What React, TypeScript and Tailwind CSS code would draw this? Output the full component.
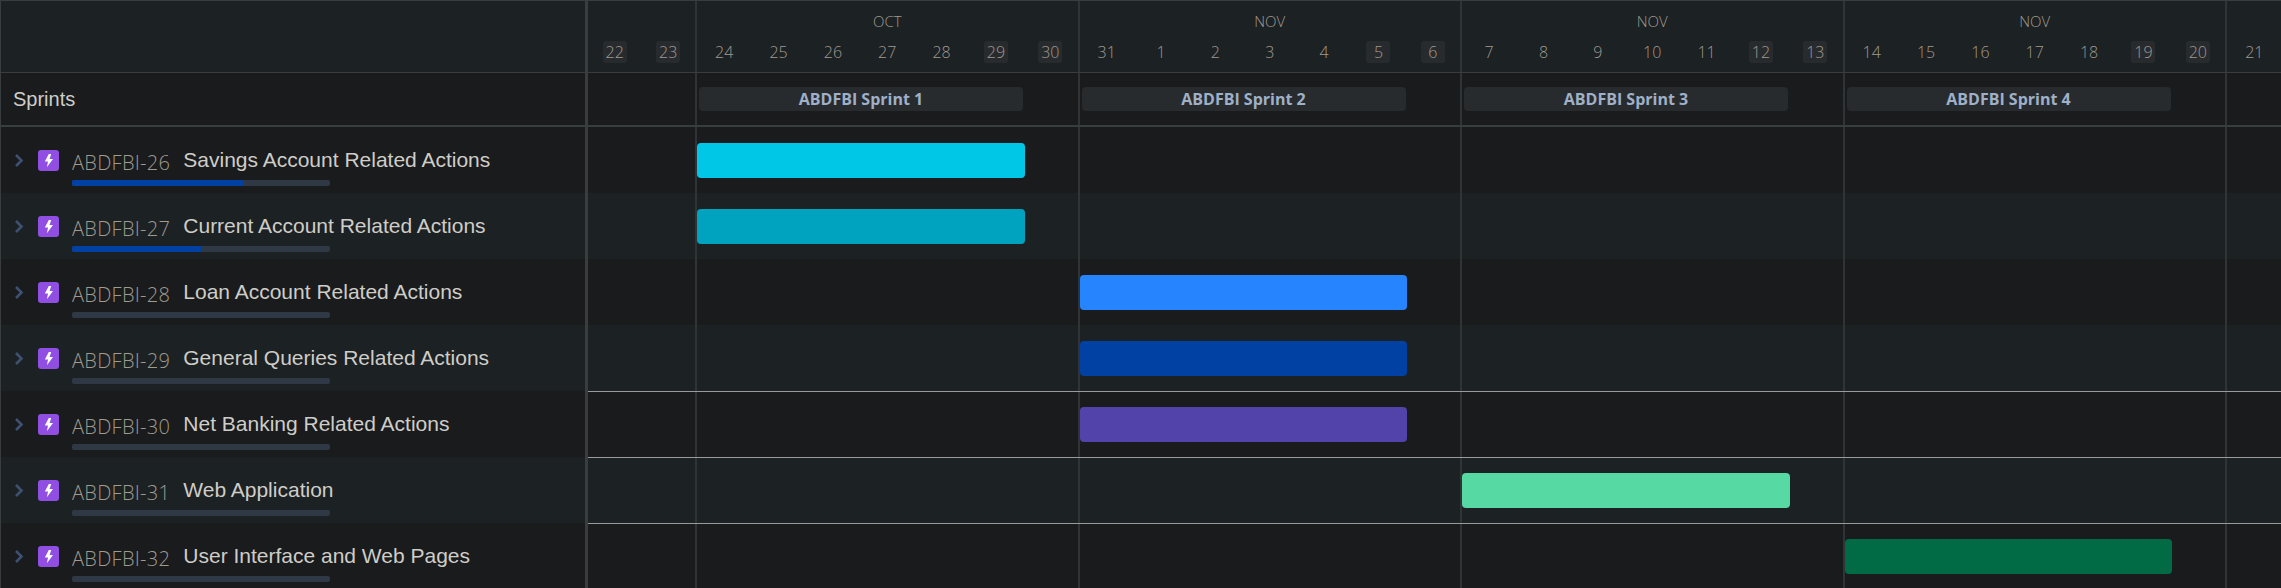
import React from "react";

interface Issue {
	id: string;
	title: string;
	progress: number;
	col: number;
	color: string;
	ruled: boolean;
}

const issues: Issue[] = [
	{ id: "ABDFBI-26", title: "Savings Account Related Actions", progress: 258 * 0.665, col: 1, color: "bg-[#00C7E6]", ruled: false },
	{ id: "ABDFBI-27", title: "Current Account Related Actions", progress: 129, col: 1, color: "bg-[#00A3BF]", ruled: false },
	{ id: "ABDFBI-28", title: "Loan Account Related Actions", progress: 0, col: 2, color: "bg-[#2684FF]", ruled: false },
	{ id: "ABDFBI-29", title: "General Queries Related Actions", progress: 0, col: 2, color: "bg-[#0041A3]", ruled: false },
	{ id: "ABDFBI-30", title: "Net Banking Related Actions", progress: 0, col: 2, color: "bg-[#5243AA]", ruled: true },
	{ id: "ABDFBI-31", title: "Web Application", progress: 0, col: 3, color: "bg-[#57D9A3]", ruled: true },
	{ id: "ABDFBI-32", title: "User Interface and Web Pages", progress: 0, col: 4, color: "bg-[#006B45]", ruled: true },
];

const columns = [
	{ width: "w-[109px]", month: "", days: [22, 23], weekend: [0, 1] },
	{ width: "w-[382.5px]", month: "OCT", days: [24, 25, 26, 27, 28, 29, 30], weekend: [5, 6] },
	{ width: "w-[382.5px]", month: "NOV", days: [31, 1, 2, 3, 4, 5, 6], weekend: [5, 6] },
	{ width: "w-[382.5px]", month: "NOV", days: [7, 8, 9, 10, 11, 12, 13], weekend: [5, 6] },
	{ width: "w-[382.5px]", month: "NOV", days: [14, 15, 16, 17, 18, 19, 20], weekend: [5, 6] },
	{ width: "flex-1", month: "", days: [21], weekend: [] as number[] },
];

const sans = "font-['Open_Sans','Noto_Sans',sans-serif]";
const arial = "font-['Liberation_Sans',Arial,sans-serif]";

const Bolt = () => (
	<div className="flex h-[21px] w-[21px] shrink-0 items-center justify-center rounded-[3px] bg-[#904EE2]">
		<svg width="21" height="21" viewBox="0 0 21 21">
			<path d="M10.8 4 6.8 11.6H10L8.9 17.2 15 9.1H11.6L13.2 4Z" fill="#fff" />
		</svg>
	</div>
);

const Chevron = () => (
	<svg width="10" height="13" viewBox="0 0 10 13" className="mt-[4px] shrink-0">
		<path d="M2 1 7.5 6.5 2 12" fill="none" stroke="#3f5172" strokeWidth="2.6" />
	</svg>
);

export default function App() {
	return (
		<div className="flex h-[588px] w-[2281px] flex-col overflow-hidden border-t border-l border-[#383d40] bg-[#191b1d]">
			{/* date header */}
			<div className="flex h-[72px] shrink-0 border-b border-[#383d40] bg-[#1c2123]">
				<div className="w-[587px] shrink-0 border-r-[3px] border-[#383d40]" />
				{columns.map((c, i) => (
					<div key={i} className={`${c.width} flex flex-col border-r-2 border-[#303436] last:border-r-0`}>
						<div className={`h-[40px] pt-[10px] text-center text-[15px] leading-[20px] font-light text-[#a09a8f] ${sans}`}>{c.month}</div>
						<div className="flex">
							{c.days.map((d, j) => (
								<div key={d} className="flex w-[54.64px] justify-center">
									<span
										className={`flex h-[22px] w-[24px] items-center justify-center rounded-[3px] text-[16px] font-light text-[#a09a8f] ${sans} ${
											c.weekend.includes(j) ? "bg-[#282b2e]" : ""
										}`}>
										{d}
									</span>
								</div>
							))}
						</div>
					</div>
				))}
			</div>

			{/* sprints */}
			<div className="flex h-[54px] shrink-0 border-b-2 border-[#383d40]">
				<div className={`flex w-[587px] shrink-0 items-center border-r-[3px] border-[#383d40] pl-[12px] text-[20px] text-[#cfcdc8] ${arial}`}>Sprints</div>
				{columns.map((c, i) => (
					<div key={i} className={`${c.width} flex items-center border-r-2 border-[#303436] pl-[2px] last:border-r-0`}>
						{c.month && (
							<div className={`flex h-[24px] w-[324px] items-center justify-center rounded-[4px] bg-[#282b2e] text-[16px] font-bold text-[#9fb0c7] ${sans}`}>
								ABDFBI Sprint {i}
							</div>
						)}
					</div>
				))}
			</div>

			{/* issue rows */}
			{issues.map((issue, n) => (
				<div key={issue.id} className={`flex h-[66px] shrink-0 ${n % 2 === 1 ? "bg-[#1c2123]" : ""}`}>
					<div className="flex w-[587px] shrink-0 gap-[13px] border-r-[3px] border-[#383d40] pt-[23px] pl-[13px]">
						<div className="flex gap-[14px]">
							<Chevron />
							<Bolt />
						</div>
						<div className="flex flex-col">
							<div className="flex h-[30px] items-center gap-[13px]">
								<span className={`-mt-[4px] text-[20px] font-light tracking-[0.3px] text-[#a09a8f] ${sans}`}>{issue.id}</span>
								<span className={`-mt-[10px] text-[21px] text-[#cfcdc8] ${arial}`}>{issue.title}</span>
							</div>
							<div className="h-[6px] w-[258px] overflow-hidden rounded-[2px] bg-[#2f3845]">
								<div className="h-full bg-[#0041A3]" style={{ width: issue.progress }} />
							</div>
						</div>
					</div>
					<div className={`flex flex-1 ${issue.ruled ? "border-t border-[#9a9a9a]" : ""}`}>
						{columns.map((c, i) => (
							<div key={i} className={`${c.width} flex items-center border-r-2 border-[#303436] last:border-r-0`}>
								{i === issue.col && <div className={`h-[35px] w-[327.5px] rounded-[4px] ${issue.color}`} />}
							</div>
						))}
					</div>
				</div>
			))}
		</div>
	);
}
